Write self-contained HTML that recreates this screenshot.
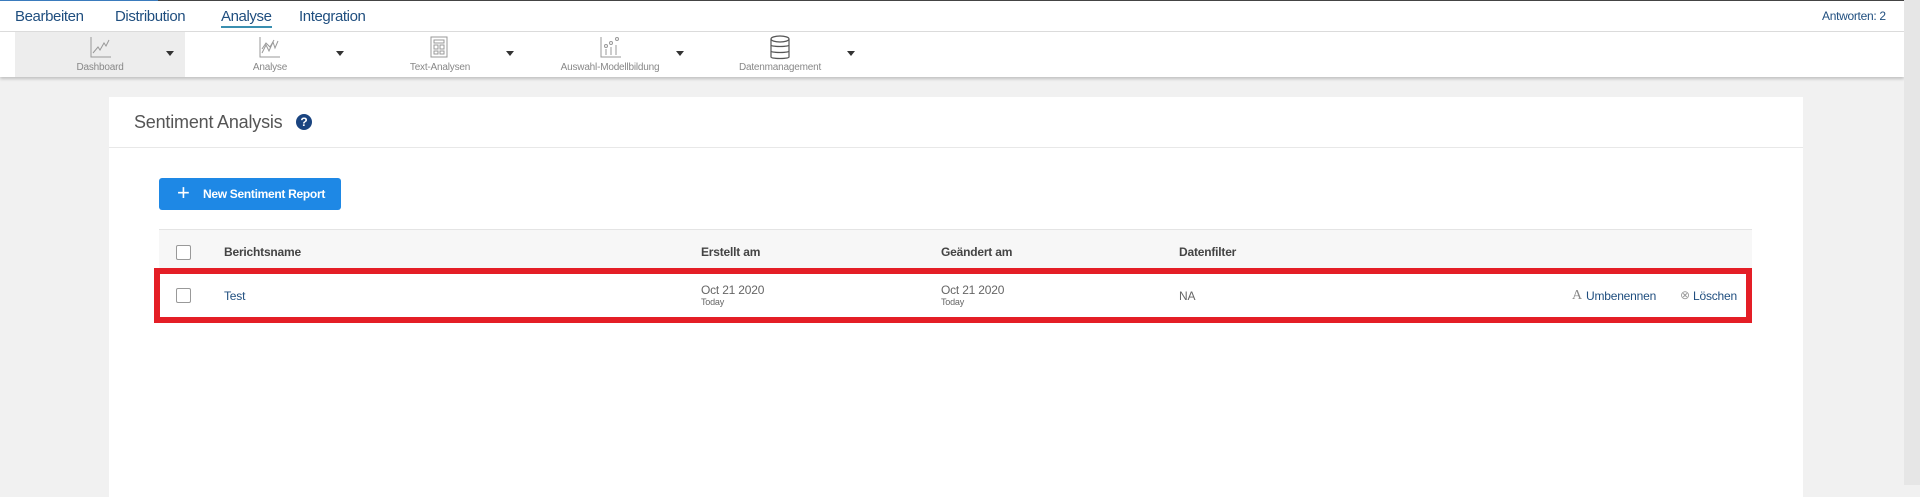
<!DOCTYPE html>
<html><head><meta charset="utf-8"><style>
*{margin:0;padding:0;box-sizing:border-box}
body{width:1920px;height:485px;overflow:hidden;background:#f1f1f1;font-family:"Liberation Sans",sans-serif;position:relative;white-space:nowrap}
.abs{position:absolute}
.top{left:0;top:0;width:1904px;height:32px;background:#fff;border-top:1px solid #444;border-bottom:1px solid #ddd}
.top .nav{position:absolute;top:7px;font-size:15px;letter-spacing:-0.4px;color:#1f4e7f}
.tool{left:0;top:32px;width:1904px;height:45px;background:#fff;box-shadow:0 2px 3px rgba(0,0,0,.2)}
.item{position:absolute;top:0;height:45px;text-align:center}
.item .lbl{position:absolute;top:30px;left:0;width:100%;font-size:10px;color:#888;letter-spacing:-0.2px}
.item svg{position:absolute;top:3px}
.arr{position:absolute;top:19px;width:0;height:0;border-left:4px solid transparent;border-right:4px solid transparent;border-top:5px solid #333}
.sb{left:1904px;top:0;width:16px;height:485px;background:#e6e6e6}
.card{left:109px;top:97px;width:1694px;height:400px;background:#fff}
.hdr{font-size:18px;color:#555;position:absolute;left:25px;top:15px;letter-spacing:-0.2px}
.q{position:absolute;left:187px;top:17px;width:16px;height:16px;border-radius:50%;background:#1a4480;color:#fff;font:bold 12px "Liberation Sans",sans-serif;text-align:center;line-height:16px}
.btn{left:159px;top:178px;width:182px;height:32px;background:#1e88e5;border-radius:3px;color:#fff;font-size:12px;font-weight:bold}
.th{left:159px;top:229px;width:1593px;height:40px;background:#f7f7f7;border-top:1px solid #e4e4e4}
.cb{position:absolute;width:15px;height:15px;border:1px solid #999;border-radius:2px;background:#fff}
.t{position:absolute;font-size:12px;letter-spacing:-0.2px}
</style></head><body>
<div class="abs top">
<div class="abs" style="left:0;top:-1px;width:158px;height:1px;background:#3a7bbd"></div>
<span class="nav" style="left:15px">Bearbeiten</span>
<span class="nav" style="left:115px">Distribution</span>
<span class="nav" style="left:221px;border-bottom:2px solid #3a8fb0;line-height:18px">Analyse</span>
<span class="nav" style="left:299px">Integration</span>
<span class="nav" style="left:1822px;font-size:12px;top:8px;letter-spacing:-0.3px">Antworten: 2</span>
</div>
<div class="abs tool">
<div class="item" style="left:15px;width:170px;background:#ededed">
<svg style="left:74px" width="24" height="24" viewBox="0 0 24 24" fill="none" stroke="#999" stroke-width="1"><path d="M2 2V22H22M4 18L9 12L11 15L15 8L17 11L20 5"/></svg>
<div class="lbl">Dashboard</div></div>
<div class="arr" style="left:166px"></div>
<div class="item" style="left:185px;width:170px">
<svg style="left:73px" width="24" height="24" viewBox="0 0 24 24" fill="none" stroke="#999" stroke-width="1"><path d="M2 2V22H22M4 18L8 10L11 16L15 7L17 13L20 6M4 14L8 8L12 12L16 5"/></svg>
<div class="lbl">Analyse</div></div>
<div class="arr" style="left:336px"></div>
<div class="item" style="left:355px;width:170px">
<svg style="left:72px" width="24" height="24" viewBox="0 0 24 24" fill="none" stroke="#999" stroke-width="1"><rect x="4" y="2" width="16" height="20"/><rect x="7" y="5" width="10" height="3"/><rect x="7" y="10" width="4" height="4"/><rect x="13" y="10" width="4" height="4"/><rect x="7" y="16" width="4" height="3"/><rect x="13" y="16" width="4" height="3"/></svg>
<div class="lbl">Text-Analysen</div></div>
<div class="arr" style="left:506px"></div>
<div class="item" style="left:525px;width:170px">
<svg style="left:74px" width="24" height="24" viewBox="0 0 24 24" fill="none" stroke="#999" stroke-width="1"><path d="M2 2V22H22M7 20V14M12 20V12M17 20V10"/><circle cx="7" cy="11" r="1.5"/><circle cx="12" cy="8" r="1.5"/><circle cx="18" cy="4" r="1.5"/></svg>
<div class="lbl">Auswahl-Modellbildung</div></div>
<div class="arr" style="left:676px"></div>
<div class="item" style="left:695px;width:170px">
<svg style="left:73px" width="24" height="26" viewBox="0 0 24 26" fill="none" stroke="#555" stroke-width="1.2"><ellipse cx="12" cy="4" rx="9" ry="3"/><path d="M3 4V22C3 24 21 24 21 22V4M3 10C3 12 21 12 21 10M3 16C3 18 21 18 21 16"/></svg>
<div class="lbl">Datenmanagement</div></div>
<div class="arr" style="left:847px"></div>
</div>
<div class="abs sb"></div>
<div class="abs card">
<div class="hdr">Sentiment Analysis</div>
<div class="q">?</div>
<div class="abs" style="left:0;top:50px;width:1694px;height:1px;background:#e8e8e8"></div>
</div>
<div class="abs btn"><span style="position:absolute;left:18px;top:2px;font-size:22px;font-weight:normal">+</span><span style="position:absolute;left:44px;top:9px;letter-spacing:-0.3px">New Sentiment Report</span></div>
<div class="abs th">
<div class="cb" style="left:17px;top:15px"></div>
<span class="t" style="left:65px;top:15px;font-weight:bold;color:#444">Berichtsname</span>
<span class="t" style="left:542px;top:15px;font-weight:bold;color:#444">Erstellt am</span>
<span class="t" style="left:782px;top:15px;font-weight:bold;color:#444">Geändert am</span>
<span class="t" style="left:1020px;top:15px;font-weight:bold;color:#444">Datenfilter</span>
</div>
<div class="abs" style="left:154px;top:268px;width:1598px;height:55px;border:6px solid #e41e26;background:#fff">
<div class="cb" style="left:16px;top:14px"></div>
<span class="t" style="left:64px;top:15px;color:#1f4e7f">Test</span>
<span class="t" style="left:541px;top:9px;color:#666">Oct 21 2020</span>
<span class="t" style="left:541px;top:23px;color:#666;font-size:9px">Today</span>
<span class="t" style="left:781px;top:9px;color:#666">Oct 21 2020</span>
<span class="t" style="left:781px;top:23px;color:#666;font-size:9px">Today</span>
<span class="t" style="left:1019px;top:15px;color:#666">NA</span>
<span class="t" style="left:1412px;top:14px;color:#888;font-family:'Liberation Serif',serif;font-size:14px">A</span>
<span class="t" style="left:1426px;top:15px;color:#1f4e7f">Umbenennen</span>
<span class="t" style="left:1520px;top:14px;color:#999;font-size:12px">⊗</span>
<span class="t" style="left:1533px;top:15px;color:#1f4e7f">Löschen</span>
</div>
</body></html>
